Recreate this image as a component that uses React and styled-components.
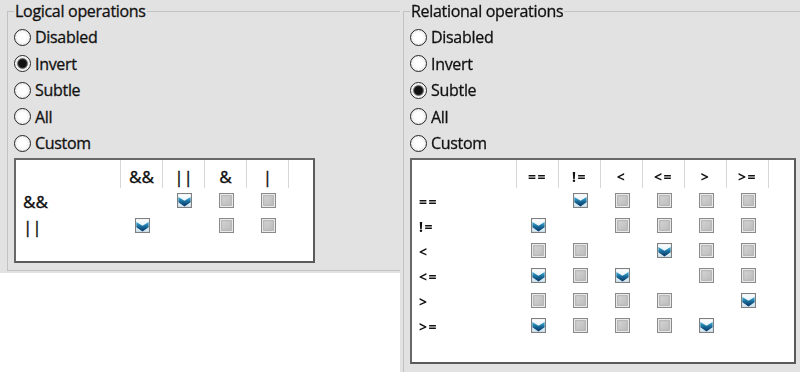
import React from "react"
import styled, { createGlobalStyle } from "styled-components"

const GlobalStyle = createGlobalStyle`
  html, body {
    margin: 0;
    padding: 0;
    background: #fff;
  }
  body {
    font-family: "Open Sans", "Noto Sans", sans-serif;
    color: #111;
  }
`

const Screen = styled.div`
  display: flex;
  align-items: flex-start;
  width: 800px;
  height: 372px;
  overflow: hidden;
  opacity: 0.999;
`

const Panel = styled.div`
  width: 400px;
  height: ${props => props.$height}px;
  background: #e2e2e2;
  overflow: hidden;
  flex-shrink: 0;
`

const Group = styled.fieldset`
  box-sizing: border-box;
  margin: 0 0 0 ${props => props.$inset}px;
  padding: 0 6px;
  width: 460px;
  height: ${props => props.$height}px;
  border: 1px solid #c2c2c2;
  min-width: 0;
`

const Legend = styled.legend`
  padding: 0 1px;
  font-size: 16px;
  line-height: 22px;
  letter-spacing: -0.3px;
  -webkit-text-stroke: 0.3px #111;
`

const RadioList = styled.div`
  display: flex;
  flex-direction: column;
  padding-top: 2px;
`

const RadioRow = styled.label`
  display: flex;
  align-items: center;
  gap: 4px;
  height: 26.5px;
  font-size: 16px;
  letter-spacing: -0.3px;
  -webkit-text-stroke: 0.3px #111;
`

const RadioDot = styled.span`
  box-sizing: border-box;
  width: 17px;
  height: 17px;
  border-radius: 50%;
  border: 1.6px solid #262626;
  background: ${props =>
    props.$on
      ? "radial-gradient(circle, #111 0 3.8px, #5e5e5e 4.8px, #e4e4e4 5.8px, #fff 7px)"
      : "radial-gradient(circle, #fff 0 4px, #eee 7px)"};
`

const TableBox = styled.div`
  box-sizing: border-box;
  margin-top: 1.5px;
  width: ${props => props.$width}px;
  height: ${props => props.$height}px;
  background: #fff;
  border: 2px solid #5a5a5a;
  border-top-color: #686868;
  border-left-color: #686868;
  font-family: "Noto Sans", sans-serif;
`

const Grid = styled.div`
  display: grid;
  grid-template-columns: 105px repeat(${props => props.$cols}, 42px);
  grid-template-rows: 29px;
  grid-auto-rows: 25px;
`

const HeadCell = styled.div`
  box-sizing: border-box;
  height: 28px;
  padding-top: 6px;
  border-right: 1px solid #d6d6d6;
  display: flex;
  justify-content: center;
  line-height: 22px;
  font-size: ${props => (props.$bold ? "14px" : "17px")};
  font-weight: ${props => (props.$bold ? 700 : 400)};
  letter-spacing: ${props => (props.$bold ? "1.5px" : "0")};
  -webkit-text-stroke: ${props => (props.$bold ? "0" : "0.3px #111")};
`

const RowLabel = styled.div`
  display: flex;
  align-items: center;
  padding-left: 7px;
  font-size: ${props => (props.$bold ? "14px" : "17px")};
  font-weight: ${props => (props.$bold ? 700 : 400)};
  letter-spacing: ${props => (props.$bold ? "1.5px" : "0")};
  -webkit-text-stroke: ${props => (props.$bold ? "0" : "0.3px #111")};
`

const Cell = styled.div`
  display: flex;
  align-items: center;
  justify-content: center;
  padding-bottom: 2px;
`

const CheckedBox = () => (
  <svg width="15" height="15" viewBox="0 0 14 14">
    <defs>
      <linearGradient id="cbBg" x1="0" y1="0" x2="0" y2="1">
        <stop offset="0" stopColor="#ffffff" />
        <stop offset="1" stopColor="#cfe5f1" />
      </linearGradient>
      <linearGradient id="cbMark" x1="0" y1="0" x2="0" y2="1">
        <stop offset="0" stopColor="#3fb0dc" />
        <stop offset="0.5" stopColor="#176796" />
        <stop offset="1" stopColor="#0a3363" />
      </linearGradient>
    </defs>
    <rect x="0.5" y="0.5" width="13" height="13" fill="url(#cbBg)" stroke="#7f7f7f" />
    <path d="M1.3 3.8 L7 7.3 L12.7 3.8 L12.7 8.7 L7 12.6 L1.3 8.7 Z" fill="url(#cbMark)" />
  </svg>
)

const EmptyBox = () => (
  <svg width="15" height="15" viewBox="0 0 14 14">
    <defs>
      <linearGradient id="ebFill" x1="0" y1="0" x2="1" y2="1">
        <stop offset="0" stopColor="#d4d4d4" />
        <stop offset="1" stopColor="#bcbcbc" />
      </linearGradient>
    </defs>
    <rect x="0.5" y="0.5" width="13" height="13" fill="#f0f0f0" stroke="#8a8a8a" />
    <rect x="2.5" y="2.5" width="9" height="9" fill="url(#ebFill)" stroke="#b2b2b2" />
  </svg>
)

const OPTIONS = ["Disabled", "Invert", "Subtle", "All", "Custom"]

const OpsGroup = ({ title, selected, cols, rows, bold, inset, groupHeight, boxWidth, boxHeight }) => (
  <Group $inset={inset} $height={groupHeight}>
    <Legend>{title}</Legend>
    <RadioList>
      {OPTIONS.map(opt => (
        <RadioRow key={opt}>
          <RadioDot $on={opt === selected} />
          {opt}
        </RadioRow>
      ))}
    </RadioList>
    <TableBox $width={boxWidth} $height={boxHeight}>
      <Grid $cols={cols.length}>
        <HeadCell />
        {cols.map(c => (
          <HeadCell key={c} $bold={bold}>{c}</HeadCell>
        ))}
        {rows.map(row => (
          <React.Fragment key={row.label}>
            <RowLabel $bold={bold}>{row.label}</RowLabel>
            {row.marks.map((m, i) => (
              <Cell key={i}>
                {m === 1 && <CheckedBox />}
                {m === 0 && <EmptyBox />}
              </Cell>
            ))}
          </React.Fragment>
        ))}
      </Grid>
    </TableBox>
  </Group>
)

const logicalRows = [
  { label: "&&", marks: [null, 1, 0, 0] },
  { label: "||", marks: [1, null, 0, 0] },
]

const relationalRows = [
  { label: "==", marks: [null, 1, 0, 0, 0, 0] },
  { label: "!=", marks: [1, null, 0, 0, 0, 0] },
  { label: "<", marks: [0, 0, null, 1, 0, 0] },
  { label: "<=", marks: [1, 0, 1, null, 0, 0] },
  { label: ">", marks: [0, 0, 0, 0, null, 1] },
  { label: ">=", marks: [1, 0, 0, 0, 1, null] },
]

export default function App() {
  return (
    <>
      <GlobalStyle />
      <Screen>
        <Panel $height={273}>
          <OpsGroup
            title="Logical operations"
            selected="Invert"
            cols={["&&", "||", "&", "|"]}
            rows={logicalRows}
            inset={7}
            groupHeight={271}
            boxWidth={301}
            boxHeight={105}
          />
        </Panel>
        <Panel $height={372}>
          <OpsGroup
            title="Relational operations"
            selected="Subtle"
            cols={["==", "!=", "<", "<=", ">", ">="]}
            rows={relationalRows}
            bold
            inset={3}
            groupHeight={420}
            boxWidth={386}
            boxHeight={206}
          />
        </Panel>
      </Screen>
    </>
  )
}
